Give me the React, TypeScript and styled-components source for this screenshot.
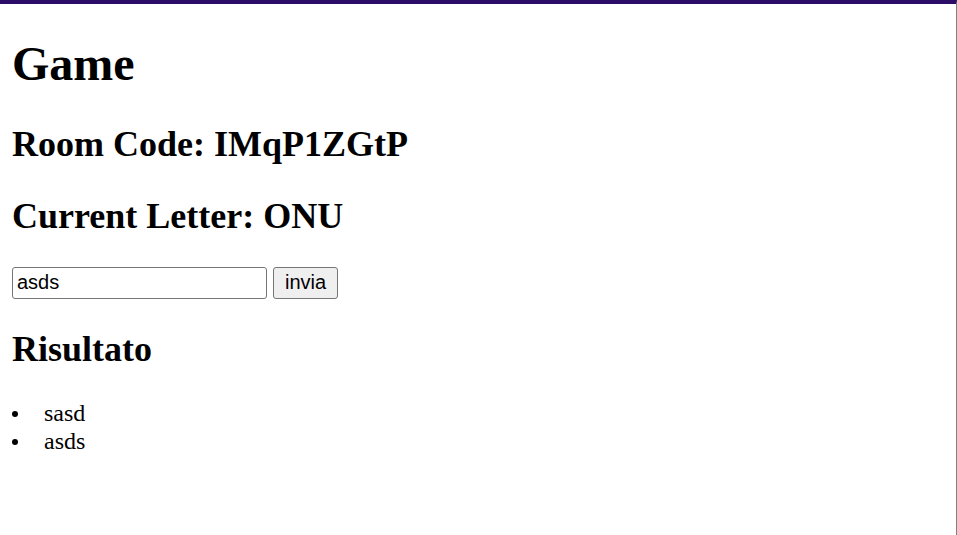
import React from "react";
import styled, { createGlobalStyle } from "styled-components";

const Global = createGlobalStyle`
  html, body { margin: 0; padding: 0; background: #ffffff; }
  body { font-family: "Liberation Serif", "Times New Roman", serif; color: #000; }
`;

const Page = styled.div`
  box-sizing: border-box;
  min-height: 100vh;
  border-top: 4px solid #2b0d68;
  border-right: 1px solid #808080;
  padding: 0 12px;
  display: flow-root;
`;

const Title = styled.h1`
  font-size: 48px;
  font-weight: bold;
  margin: 32px 0 33px;
  line-height: 1.149;
`;

const Heading = styled.h2`
  font-size: 36px;
  font-weight: bold;
  margin: 30px 0;
  line-height: 1.149;
`;

const Row = styled.form`
  display: flex;
  align-items: center;
  gap: 6px;
  margin: 0 0 1px;
  padding: 0;
`;

const TextInput = styled.input`
  box-sizing: border-box;
  width: 255px;
  height: 32px;
  padding: 0 4px;
  border: 1px solid #767676;
  border-radius: 3px;
  font-family: "Liberation Sans", Arial, sans-serif;
  font-size: 20px;
  color: #000;
  background: #fff;
  outline: none;
`;

const Button = styled.button`
  box-sizing: border-box;
  height: 32px;
  padding: 0 11px;
  border: 1px solid #767676;
  border-radius: 3px;
  background: #efefef;
  font-family: "Liberation Sans", Arial, sans-serif;
  font-size: 20px;
  color: #000;
`;

const List = styled.ul`
  list-style: none;
  margin: 29px 0 30px;
  padding: 0;
`;

const Item = styled.li`
  font-size: 24px;
  line-height: 1.149;
  &::before {
    content: "";
    display: inline-block;
    width: 6px;
    height: 6px;
    border-radius: 50%;
    background: #000;
    margin-right: 26px;
    vertical-align: 4px;
  }
`;

export default function App() {
  return (
    <>
      <Global />
      <Page>
        <Title>Game</Title>
        <Heading>Room Code: IMqP1ZGtP</Heading>
        <Heading>Current Letter: ONU</Heading>
        <Row onSubmit={(e) => e.preventDefault()}>
          <TextInput defaultValue="asds" />
          <Button type="submit">invia</Button>
        </Row>
        <Heading>Risultato</Heading>
        <List>
          <Item>sasd</Item>
          <Item>asds</Item>
        </List>
      </Page>
    </>
  );
}
